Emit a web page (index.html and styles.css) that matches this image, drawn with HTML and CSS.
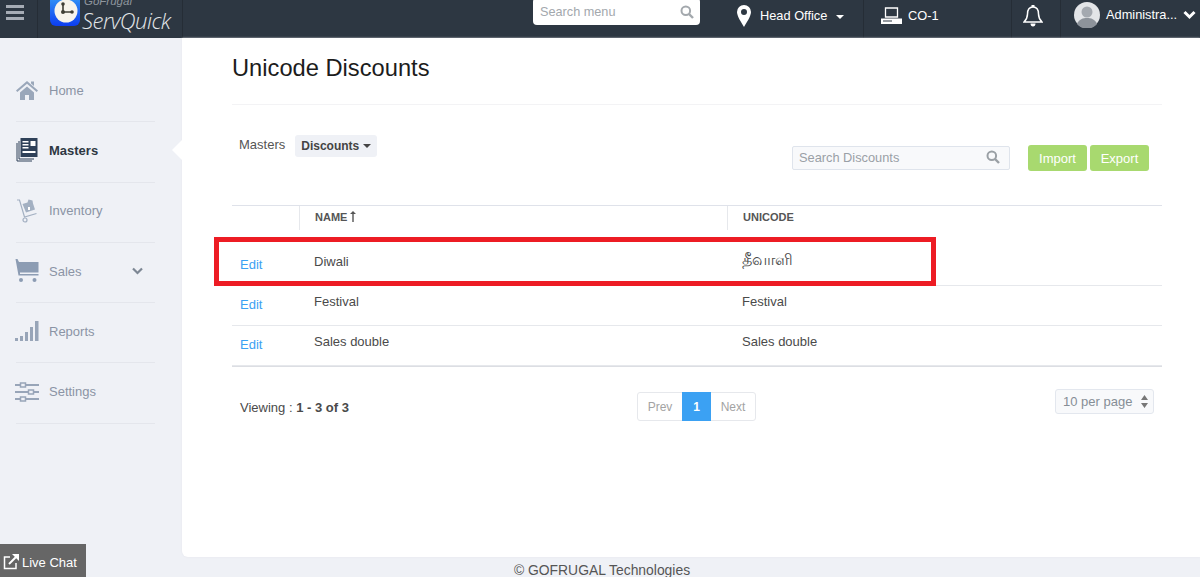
FILE: index.html
```html
<!DOCTYPE html>
<html lang="en">
<head>
    <meta charset="UTF-8">
    <meta name="viewport" content="width=device-width, initial-scale=1.0">
    <title>Unicode Discounts</title>
    <link rel="stylesheet" href="styles.css">
</head>
<body>
    <header class="topbar">
        <div class="menu-toggle">
            <svg width="18" height="15" viewBox="0 0 18 15"><path fill="#a6acb5" d="M0 0h18v3H0zM0 6h18v3H0zM0 12h18v3H0z"/></svg>
        </div>
        <div class="brand">
            <svg class="brand-icon" width="30" height="28" viewBox="0 0 30 28">
                <defs>
                    <linearGradient id="logo-blue" x1="0" y1="0" x2="0" y2="1">
                        <stop offset="0" stop-color="#2f8ff5"/>
                        <stop offset="1" stop-color="#0c3df0"/>
                    </linearGradient>
                </defs>
                <path fill="url(#logo-blue)" d="M0 0h30v21a6 6 0 0 1-6 6H6a6 6 0 0 1-6-6z"/>
                <circle cx="16" cy="12" r="11.500" fill="#f6f4ec"/>
                <path fill="none" stroke="#3f3f36" stroke-width="1.600" d="M13 5v8h9"/>
                <circle cx="13" cy="5" r="1.800" fill="#3f3f36"/>
                <circle cx="13" cy="13" r="2" fill="#3f3f36"/>
                <circle cx="22" cy="13" r="1.800" fill="#3f3f36"/>
            </svg>
            <div class="brand-text">
                <span class="brand-small">GoFrugal</span>
                <span class="brand-name">ServQuick</span>
            </div>
        </div>
        <div class="menu-search">
            <span>Search menu</span>
            <svg width="14" height="14" viewBox="0 0 14 14"><circle cx="5.800" cy="5.800" r="4.300" fill="none" stroke="#a3a8ad" stroke-width="2"/><path stroke="#a3a8ad" stroke-width="2.400" d="M9 9l4 4"/></svg>
        </div>
        <div class="top-item office">
            <svg width="14" height="22" viewBox="0 0 14 22"><path fill="#fff" fill-rule="evenodd" d="M7 0a7 7 0 0 1 7 7c0 4-4 10-7 15C4 17 0 11 0 7a7 7 0 0 1 7-7zm0 4a3 3 0 1 0 0 6 3 3 0 0 0 0-6z"/></svg>
            <span>Head Office</span>
            <i class="caret"></i>
        </div>
        <div class="top-item counter">
            <svg width="21" height="18" viewBox="0 0 21 18"><path fill="none" stroke="#fff" stroke-width="1.300" d="M4.500 1h12v9h-12z"/><path fill="#fff" d="M0 11.500h21V17H0z"/><path fill="#2d3742" d="M2 13.500h9v1H2z"/></svg>
            <span>CO-1</span>
        </div>
        <div class="top-item bell">
            <svg width="20" height="24" viewBox="0 0 20 24"><path fill="none" stroke="#fff" stroke-width="1.500" d="M10 3c4 0 5.500 3 5.500 7 0 4 1.500 6 3.500 8H1c2-2 3.500-4 3.500-8 0-4 1.500-7 5.500-7z"/><path fill="#fff" d="M8.500 1h3v2h-3zM7.500 19.500h5c0 2-1 3-2.500 3s-2.500-1-2.500-3z"/></svg>
        </div>
        <div class="top-item user">
            <svg width="26" height="26" viewBox="0 0 26 26"><circle cx="13" cy="13" r="13" fill="#e3e5e8"/><circle cx="13" cy="10" r="5.500" fill="#a4a9b0"/><path fill="#8d939b" d="M3 22c2-5 6-6 10-6s8 1 10 6a13 13 0 0 1-20 0z"/></svg>
            <span>Administra...</span>
            <svg width="13" height="10" viewBox="0 0 13 10"><path fill="none" stroke="#fff" stroke-width="3" d="M1.500 2l5 5 5-5"/></svg>
        </div>
    </header>

    <div class="layout">
        <nav class="sidebar">
            <ul>
                <li>
                    <svg width="22" height="20" viewBox="0 0 22 20"><path fill="#9aa7ba" d="M11 1l11 9.500-1.300 1.500L11 3.800 1.300 12 0 10.500zM15 1.500h3v4.500l-3-2.500zM4 12.500l7-6 7 6V20h-5v-5H9v5H4z"/></svg>
                    <span>Home</span>
                </li>
                <li class="active">
                    <svg width="21" height="24" viewBox="0 0 21 24"><path fill="#2f4159" d="M4 0h17v19H4z"/><path fill="none" stroke="#2f4159" d="M2.500 3v18h15M.5 5v18h15"/><path fill="#fff" d="M6 3h6v1.500H6zM6 6h6v1.500H6zM6 9h6v1.500H6zM14 3h5v5h-5zM6 13h13v2H6z"/></svg>
                    <span>Masters</span>
                </li>
                <li>
                    <svg width="22" height="24" viewBox="0 0 22 24"><path fill="none" stroke="#a3b0c2" stroke-width="1.200" d="M1 1h2.500l5 17 12-3.500"/><circle cx="9" cy="21" r="2" fill="none" stroke="#a3b0c2" stroke-width="1.200"/><path fill="#a3b0c2" d="M6.500 5l5-1.500 1-3 4 1 .5 3 2 6-9 3z"/><path fill="#fff" d="M12 8h2v3h-2z"/></svg>
                    <span>Inventory</span>
                </li>
                <li>
                    <svg width="23" height="24" viewBox="0 0 23 24"><path fill="#8c9cb3" d="M0 0h2l1.500 3H23v10.500H4.500v1.500H23v1.500H3z"/><circle cx="5.500" cy="21" r="2" fill="#8c9cb3"/><circle cx="19" cy="21" r="2" fill="#8c9cb3"/></svg>
                    <span>Sales</span>
                    <svg class="chevron" width="11" height="8" viewBox="0 0 11 8"><path fill="none" stroke="#7d8794" stroke-width="2.200" d="M1 1.500l4.500 4.500L10 1.500"/></svg>
                </li>
                <li>
                    <svg width="24" height="20" viewBox="0 0 24 20"><path fill="#98a5b8" d="M0 17h3v3H0zM5 15h3v5H5zM10 11h3v9h-3zM15 6h3v14h-3zM20 0h3.500v20H20z"/></svg>
                    <span>Reports</span>
                </li>
                <li>
                    <svg width="24" height="20" viewBox="0 0 24 20"><path fill="none" stroke="#98a5b8" stroke-width="2" d="M0 3h5M11 3h13M0 10h13M19 10h5M0 17h5M11 17h13"/><path fill="none" stroke="#98a5b8" stroke-width="1.500" d="M5.500 1h5v4h-5zM13.500 8h5v4h-5zM5.500 15h5v4h-5z"/></svg>
                    <span>Settings</span>
                </li>
            </ul>
        </nav>

        <div class="content-wrap">
            <main class="content">
                <h1>Unicode Discounts</h1>
                <div class="toolbar">
                    <div class="crumbs">
                        <span class="crumb-label">Masters</span>
                        <span class="crumb-pill">Discounts <i class="caret dark"></i></span>
                    </div>
                    <div class="search-box">
                        <span>Search Discounts</span>
                        <svg width="14" height="14" viewBox="0 0 14 14"><circle cx="5.800" cy="5.800" r="4.300" fill="none" stroke="#9aa0a5" stroke-width="2"/><path stroke="#9aa0a5" stroke-width="2.400" d="M9 9l4 4"/></svg>
                    </div>
                    <div class="actions">
                        <button class="btn-green">Import</button>
                        <button class="btn-green">Export</button>
                    </div>
                </div>

                <div class="table-box">
                    <div class="row head">
                        <div class="cell edit"></div>
                        <div class="cell name">NAME <svg width="6" height="11" viewBox="0 0 6 11"><path fill="#555" d="M2.300 3H0l3-3 3 3H3.700v8H2.300z"/></svg></div>
                        <div class="cell code">UNICODE</div>
                    </div>
                    <div class="row">
                        <div class="cell edit"><a href="#">Edit</a></div>
                        <div class="cell name">Diwali</div>
                        <div class="cell code tamil">தீவாளி</div>
                    </div>
                    <div class="row">
                        <div class="cell edit"><a href="#">Edit</a></div>
                        <div class="cell name">Festival</div>
                        <div class="cell code">Festival</div>
                    </div>
                    <div class="row">
                        <div class="cell edit"><a href="#">Edit</a></div>
                        <div class="cell name">Sales double</div>
                        <div class="cell code">Sales double</div>
                    </div>
                    <div class="highlight"></div>
                </div>

                <div class="pager-row">
                    <div class="viewing">Viewing : <b>1 - 3 of 3</b></div>
                    <div class="pager">
                        <span>Prev</span>
                        <span class="current">1</span>
                        <span>Next</span>
                    </div>
                    <div class="per-page">
                        <span>10 per page</span>
                        <svg width="7" height="13" viewBox="0 0 7 13"><path fill="#777" d="M3.500 0L7 5H0zM0 8h7l-3.500 5z"/></svg>
                    </div>
                </div>
            </main>
            <footer class="footer">© GOFRUGAL Technologies</footer>
        </div>
    </div>

    <div class="live-chat">
        <svg width="16" height="16" viewBox="0 0 16 16"><path fill="none" stroke="#fff" stroke-width="1.500" d="M7 3H1.500v11.500H13V9"/><path fill="none" stroke="#fff" stroke-width="2" d="M6 10l7-7"/><path fill="#fff" d="M9 0h7v7z"/></svg>
        <span>Live Chat</span>
    </div>
</body>
</html>
```
FILE: styles.css
```css
* {
    margin: 0;
    padding: 0;
    box-sizing: border-box;
}

html, body {
    height: 577px;
    overflow: hidden;
}

body {
    font-family: 'Liberation Sans', Arial, sans-serif;
    font-size: 13px;
    color: #4a4a4a;
    background-color: #eff1f6;
    display: flex;
    flex-direction: column;
}

/* top bar */
.topbar {
    height: 38px;
    flex: none;
    background-color: #2d3742;
    color: #fff;
    display: flex;
    align-items: stretch;
    overflow: hidden;
}

.menu-toggle {
    width: 38px;
    padding: 5px 0 0 6px;
    border-right: 1px solid #252d36;
}

.brand {
    width: 145px;
    padding-left: 12px;
    display: flex;
    gap: 2px;
    border-right: 1px solid #252d36;
}

.brand-icon {
    margin-top: -1px;
}

.brand-text {
    display: flex;
    flex-direction: column;
    font-style: italic;
    margin-top: -5px;
    color: #e4e7ea;
}

.brand-small {
    font-size: 11.500px;
    line-height: 13px;
    color: #8f969e;
    padding-left: 2px;
}

.brand-name {
    font-family: 'Open Sans', sans-serif;
    font-weight: 300;
    font-size: 22px;
    line-height: 24px;
    letter-spacing: -0.5px;
}

.menu-search {
    width: 167px;
    height: 27px;
    margin: -2px 0 0 350px;
    padding: 0 6px 0 7px;
    background-color: #fff;
    border-radius: 4px;
    color: #a3a8ad;
    font-size: 12.700px;
    display: flex;
    align-items: center;
    justify-content: space-between;
}

.top-item {
    display: flex;
    align-items: center;
    font-size: 12.800px;
    padding-bottom: 7px;
    border-right: 1px solid #252d36;
}

.office {
    width: 164px;
    padding-left: 37px;
    gap: 9px;
}

.counter {
    width: 148px;
    padding-left: 17px;
    gap: 6px;
}

.bell {
    width: 49px;
    padding-left: 11px;
}

.user {
    padding-left: 13px;
    gap: 6px;
    border-right: none;
    padding-bottom: 9px;
}

.caret {
    display: inline-block;
    border-top: 4px solid #fff;
    border-left: 4px solid transparent;
    border-right: 4px solid transparent;
    margin-top: 3px;
}

.caret.dark {
    border-top-color: #444;
    margin: 0 0 0 1px;
}

/* layout */
.layout {
    flex: 1;
    display: flex;
    min-height: 0;
}

.sidebar {
    width: 182px;
    flex: none;
    padding: 24px 27px 0 16px;
}

.sidebar ul {
    list-style-type: none;
}

.sidebar li {
    height: 60.3px;
    padding-bottom: 3px;
    display: flex;
    align-items: center;
    border-bottom: 1px solid #e4e6ec;
    color: #8b94a5;
    position: relative;
}

.sidebar li svg:first-child {
    width: 24px;
    margin: 0 10px 0 -1px;
}

.sidebar li.active {
    color: #2d3742;
    font-weight: bold;
}

/* little notch pointing at the active item */
.sidebar li.active::after {
    content: '';
    position: absolute;
    right: -27px;
    top: 18px;
    border-top: 10px solid transparent;
    border-bottom: 10px solid transparent;
    border-right: 10px solid #fff;
}

.chevron {
    position: absolute;
    left: 116px;
    top: 24px;
}

.content-wrap {
    flex: 1;
    display: flex;
    flex-direction: column;
    min-width: 0;
}

.content {
    flex: 1;
    background-color: #fff;
    border-bottom-left-radius: 6px;
    box-shadow: 0 0 2px #e3e5ea;
    padding: 0 38px 0 50px;
}

h1 {
    font-size: 23.700px;
    font-weight: normal;
    color: #1c1c1c;
    line-height: 28px;
    padding: 16px 0 22px;
    border-bottom: 1px solid #f3f3f5;
}

/* toolbar above the table */
.toolbar {
    height: 100px;
    display: flex;
    padding: 30px 13px 0 7px;
    align-items: flex-start;
}

.crumbs {
    display: flex;
    align-items: center;
    gap: 10px;
    width: 553px;
    color: #555;
}

.crumb-label {
    margin-top: -4px;
}

.crumb-pill {
    height: 22px;
    width: 82px;
    background-color: #eff1f6;
    border-radius: 3px;
    font-size: 12px;
    font-weight: bold;
    color: #444;
    display: flex;
    align-items: center;
    justify-content: center;
    gap: 3px;
}

.search-box {
    width: 218px;
    height: 24px;
    margin-top: 11px;
    padding: 0 9px 2px 6px;
    background-color: #f8f9fb;
    border: 1px solid #dfe4ec;
    border-radius: 2px;
    color: #9aa0a6;
    font-size: 12.800px;
    display: flex;
    align-items: center;
    justify-content: space-between;
}

.actions {
    display: flex;
    gap: 3px;
    margin: 10px 0 0 18px;
}

.btn-green {
    width: 59px;
    height: 26px;
    background-color: #a8d96f;
    border: none;
    border-radius: 3px;
    color: #fff;
    font-family: inherit;
    font-size: 13px;
}

/* table */
.table-box {
    position: relative;
    border-top: 1px solid #dfe2ea;
    border-bottom: 1px solid #dcdee3;
}

.row {
    height: 40px;
    display: flex;
    border-bottom: 1px solid #e6e8ec;
}

.row:last-of-type {
    border-bottom: none;
}

.row.head {
    height: 40px;
    border-bottom: none;
    font-size: 11px;
    font-weight: bold;
    color: #555;
}

.cell {
    display: flex;
    align-items: center;
    padding-bottom: 9px;
}

.row.head .cell {
    align-items: flex-start;
    padding: 5px 0 0;
    height: 24px;
    line-height: 12px;
    gap: 3px;
}

.row.head .name,
.row.head .code {
    border-left: 1px solid #e6e8ec;
    padding-left: 15px;
}

.edit {
    width: 67px;
    padding-left: 8px;
    padding-bottom: 2px;
}

.edit a {
    color: #3ba1f3;
    text-decoration: none;
}

.name {
    width: 428px;
    padding-left: 15px;
}

.code {
    flex: 1;
    padding-left: 15px;
}

.tamil {
    font-size: 16px;
}

/* red annotation drawn over the first row */
.highlight {
    position: absolute;
    left: -18px;
    top: 31px;
    width: 722px;
    height: 49px;
    border: 5px solid #ed1c24;
}

/* pager */
.pager-row {
    position: relative;
    display: flex;
    align-items: flex-start;
    padding: 25px 8px 0 8px;
}

.viewing {
    width: 397px;
    padding-top: 8px;
}

.pager {
    display: flex;
    height: 29px;
    width: 119px;
    border: 1px solid #e6e8ec;
    border-radius: 3px;
    font-size: 12px;
    color: #a3a3a3;
}

.pager span {
    display: flex;
    align-items: center;
    justify-content: center;
    flex: 1;
}

.pager .current {
    flex: none;
    width: 29px;
    height: 29px;
    margin-top: -1px;
    background-color: #3ba1f3;
    color: #fff;
    font-weight: bold;
}

.per-page {
    width: 99px;
    height: 25px;
    margin: -3px 0 0 299px;
    padding: 0 5px 0 7px;
    background-color: #f8f9fb;
    border: 1px solid #e3e7ee;
    border-radius: 3px;
    color: #868e96;
    display: flex;
    align-items: center;
    justify-content: space-between;
}

.footer {
    height: 20px;
    flex: none;
    text-align: center;
    color: #555;
    font-size: 13.900px;
    line-height: 27px;
    overflow: hidden;
    padding-right: 178px;
}

.live-chat {
    position: fixed;
    left: 0;
    bottom: 0;
    width: 86px;
    height: 33px;
    padding: 3px 0 0 3px;
    background-color: #666;
    color: #fff;
    display: flex;
    align-items: center;
    gap: 3px;
}
```
